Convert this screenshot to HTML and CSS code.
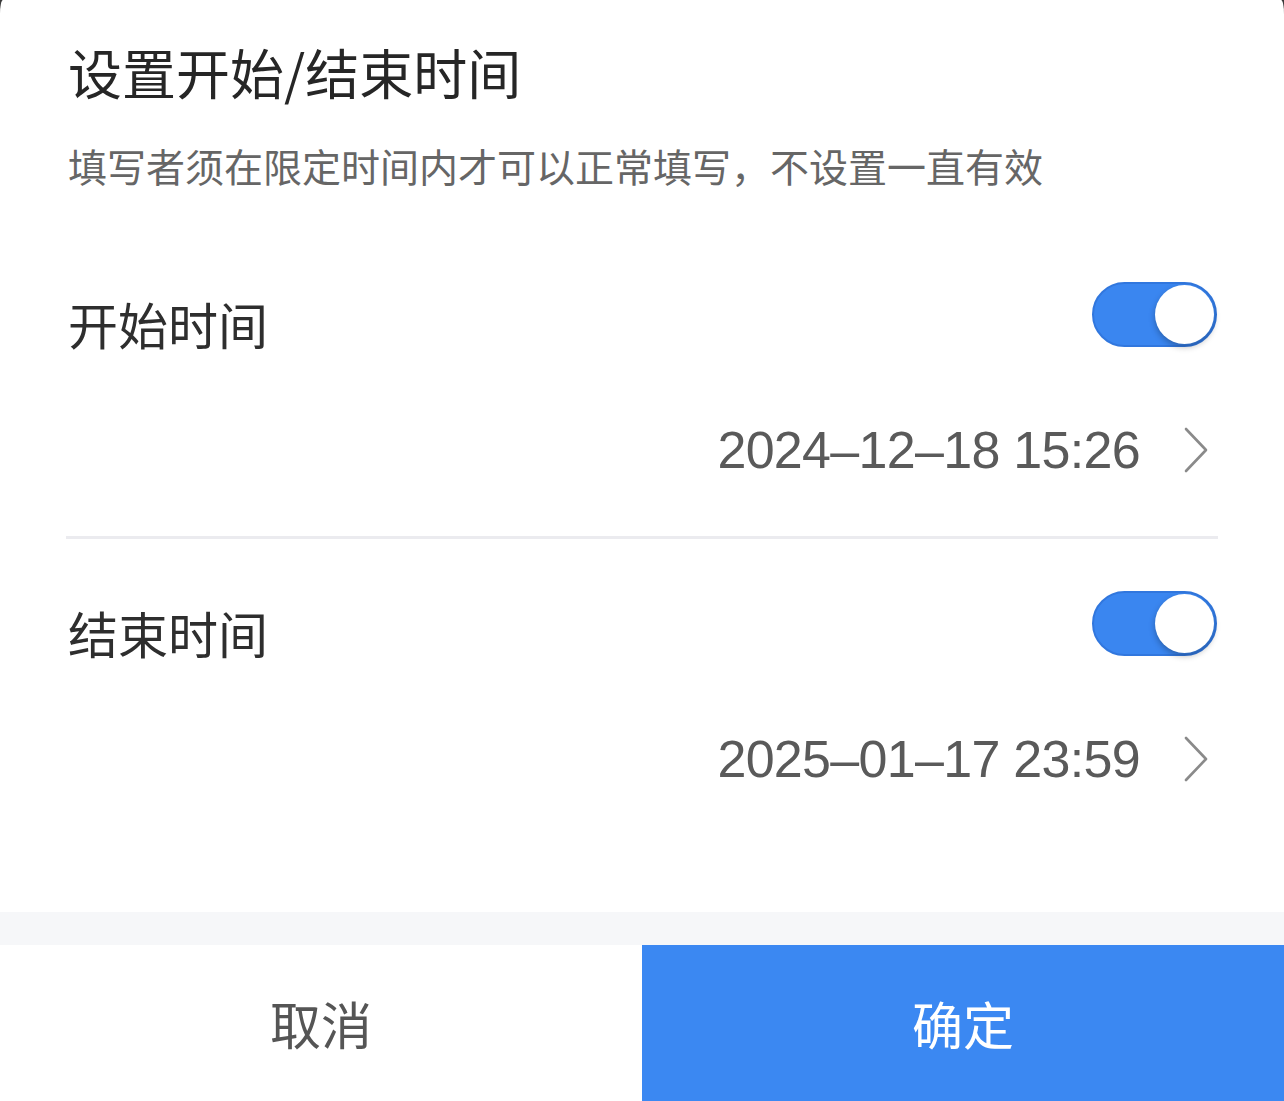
FILE: index.html
```html
<!DOCTYPE html>
<html lang="zh-CN">
<head>
<meta charset="utf-8">
<title>设置开始/结束时间</title>
<link rel="stylesheet" href="styles.css">
</head>
<body>
<div class="sheet">
  <div class="content">
    <div class="header">
      <h1 class="title">设置开始/结束时间</h1>
      <p class="subtitle">填写者须在限定时间内才可以正常填写，不设置一直有效</p>
    </div>
    <div class="section first">
      <div class="head">
        <span class="label">开始时间</span>
        <span class="switch"><span class="knob"></span></span>
      </div>
      <div class="date-row">
        <span class="date">2024–12–18 15:26</span>
        <svg class="chev" width="26" height="46" viewBox="0 0 26 46"><polyline points="3,2 23,23 3,44" fill="none" stroke="#8a8a8a" stroke-width="2.6" stroke-linecap="round" stroke-linejoin="round"/></svg>
      </div>
    </div>
    <div class="divider"></div>
    <div class="section last">
      <div class="head">
        <span class="label">结束时间</span>
        <span class="switch"><span class="knob"></span></span>
      </div>
      <div class="date-row">
        <span class="date">2025–01–17 23:59</span>
        <svg class="chev" width="26" height="46" viewBox="0 0 26 46"><polyline points="3,2 23,23 3,44" fill="none" stroke="#8a8a8a" stroke-width="2.6" stroke-linecap="round" stroke-linejoin="round"/></svg>
      </div>
    </div>
  </div>
  <div class="strip"></div>
  <div class="actions">
    <button class="btn cancel">取消</button>
    <button class="btn confirm">确定</button>
  </div>
</div>
</body>
</html>
```

FILE: styles.css
```css
* { box-sizing: border-box; }
html, body { margin: 0; padding: 0; }
body {
  background: #3a3a3a;
  width: 1284px;
  height: 1101px;
  overflow: hidden;
  font-family: "Noto Sans CJK SC", "Noto Sans", sans-serif;
}
.sheet {
  width: 1284px;
  height: 1101px;
  background: #ffffff;
  border-radius: 3px 3px 0 0 / 14px 14px 0 0;
  display: flex;
  flex-direction: column;
}
.content {
  flex: 1;
  padding: 0 66px;
}
.header {
  padding-top: 37px;
  padding-left: 2px;
}
.title {
  margin: 0;
  font-size: 54px;
  line-height: 70px;
  font-weight: 400;
  color: #262626;
}
.subtitle {
  margin: 32px 0 0;
  font-size: 39px;
  line-height: 52px;
  color: #666666;
}
.section.first { padding-top: 91px; padding-bottom: 56px; }
.section.last { padding-top: 52px; }
.head {
  display: flex;
  justify-content: space-between;
  align-items: flex-start;
  height: 65px;
  padding-left: 2px;
}
.label {
  margin-top: 11px;
  font-size: 50px;
  line-height: 60px;
  color: #2e2e2e;
}
.switch {
  position: relative;
  width: 125px;
  height: 65px;
  margin-right: 1px;
  border-radius: 33px;
  background: #3a86f0;
  border: 2px solid #3177de;
}
.knob {
  position: absolute;
  right: 1px;
  top: 1px;
  width: 59px;
  height: 59px;
  border-radius: 50%;
  background: #ffffff;
  box-shadow: 0 3px 6px rgba(0, 0, 0, 0.28);
}
.date-row {
  margin-top: 73px;
  display: flex;
  justify-content: flex-end;
  align-items: center;
  height: 60px;
}
.date {
  font-family: "Liberation Sans", Arial, sans-serif;
  font-size: 52px;
  line-height: 60px;
  letter-spacing: -0.7px;
  color: #5a5a5a;
}
.chev {
  margin-left: 43px;
  margin-right: 9px;
  display: block;
}
.divider {
  height: 3px;
  background: #ebebef;
}
.strip {
  height: 33px;
  background: #f6f7f9;
}
.actions {
  display: flex;
  height: 156px;
}
.btn {
  flex: 1;
  border: none;
  margin: 0;
  padding: 0;
  font-family: "Noto Sans CJK SC", "Noto Sans", sans-serif;
  font-size: 51px;
  line-height: 156px;
}
.cancel { background: #ffffff; color: #555555; }
.confirm { background: #3b88f2; color: #ffffff; }
```
